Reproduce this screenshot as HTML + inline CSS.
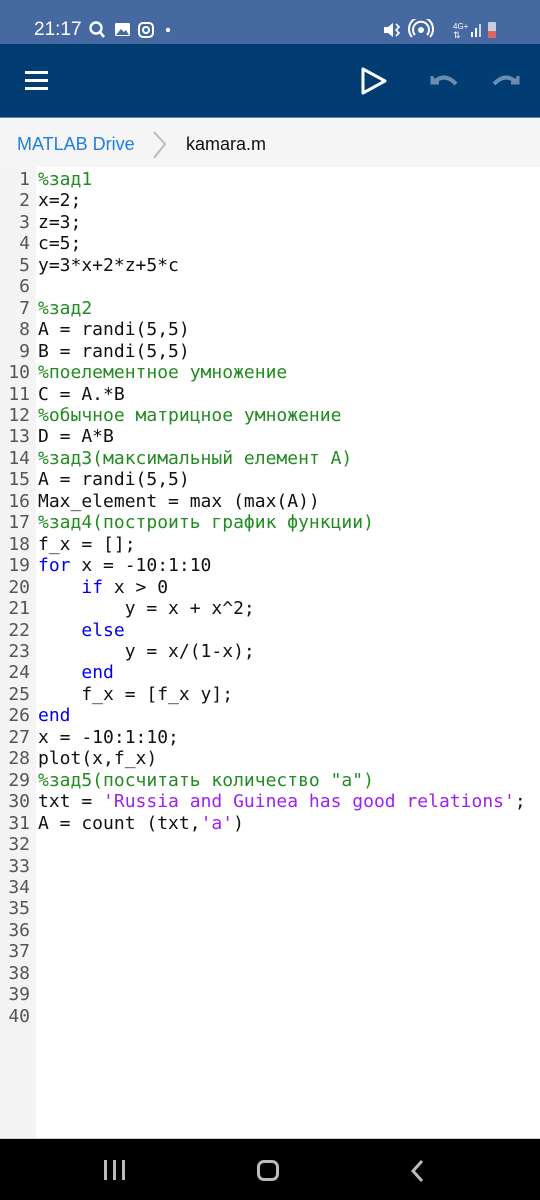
<!DOCTYPE html>
<html><head><meta charset="utf-8">
<style>
*{margin:0;padding:0;box-sizing:border-box}
body{width:540px;height:1200px;overflow:hidden;background:#fff;font-family:"Liberation Sans",sans-serif;position:relative}
.status{position:absolute;top:0;left:0;width:540px;height:44px;background:#4769a1;color:#fff}
.app{position:absolute;top:44px;left:0;width:540px;height:73px;background:#013d73}
.crumb{position:absolute;top:117px;left:0;width:540px;height:50px;background:#f5f5f5;border-top:1px solid #5d86b0}
.gut{position:absolute;top:167px;left:0;width:36px;height:971px;background:#f4f4f4}
.code{position:absolute;top:169px;left:0;width:540px;font-family:"DejaVu Sans Mono",monospace;font-size:18px;line-height:21.46px;white-space:pre;color:#111}
.ln{display:inline-block;width:30px;text-align:right;color:#555;margin-right:8px}
.c{color:#228b22}.k{color:#0000f0}.s{color:#a020f0}
.nav{position:absolute;top:1138px;left:0;width:540px;height:62px;background:#000;border-top:1px solid #ccc}
</style></head><body>
<div class="status">
<div style="position:absolute;left:34px;top:19px;font-size:19px;color:#fff">21:17</div>
<svg style="position:absolute;left:88px;top:20px" width="90" height="20" viewBox="0 0 90 20">
<circle cx="8" cy="8" r="5.5" fill="none" stroke="#fff" stroke-width="2.4"/><line x1="12" y1="12" x2="16" y2="17" stroke="#fff" stroke-width="2.6"/>
<rect x="27" y="3" width="15" height="13" rx="1.5" fill="#fff"/><path d="M28 15 L33 9 L36 12 L38 10 L41 15Z" fill="#4769a1"/>
<rect x="51" y="3" width="14" height="14" rx="4" fill="none" stroke="#fff" stroke-width="2"/><circle cx="58" cy="10" r="3" fill="none" stroke="#fff" stroke-width="2"/>
<circle cx="80" cy="10" r="2.2" fill="#fff"/></svg>
<svg style="position:absolute;left:382px;top:19px" width="130" height="22" viewBox="0 0 130 22">
<path d="M2 8h4l5-4v14l-5-4H2z" fill="#fff"/><path d="M14 5l3 3-3 3 3 3-3 3" stroke="#fff" fill="none" stroke-width="1.6"/>
<circle cx="39" cy="11" r="3" fill="#fff"/><path d="M33 16a8 8 0 1 1 12 0M30 18a12 12 0 1 1 18 0" stroke="#fff" fill="none" stroke-width="2"/>
<text x="71" y="10" font-size="8" fill="#fff" font-family="Liberation Sans">4G+</text><text x="71" y="19" font-size="9" fill="#fff">⇅</text>
<rect x="89" y="13" width="2" height="5" fill="#fff"/><rect x="93" y="9" width="2" height="9" fill="#fff"/><rect x="97" y="5" width="2" height="13" fill="#cfd8e8"/>
<rect x="106" y="3" width="8" height="16" rx="1" fill="#c8cfdc"/><rect x="106" y="12" width="8" height="7" fill="#d66"/></svg>
</div>
<div class="app">
<div style="position:absolute;left:25px;top:27px;width:23px;height:3px;background:#fff"></div>
<div style="position:absolute;left:25px;top:35px;width:23px;height:3px;background:#fff"></div>
<div style="position:absolute;left:25px;top:43px;width:23px;height:3px;background:#fff"></div>
<svg style="position:absolute;left:360px;top:22px" width="30" height="30"><path d="M3 3 L25 15 L3 27 Z" fill="none" stroke="#fff" stroke-width="3" stroke-linejoin="round"/></svg>
<svg style="position:absolute;left:428px;top:26px" width="34" height="22"><path d="M4 6 L4 13 L11 13" fill="#6c8db0" stroke="#6c8db0" stroke-width="3"/><path d="M6 12 Q17 2 28 14" fill="none" stroke="#6c8db0" stroke-width="4"/></svg>
<svg style="position:absolute;left:490px;top:26px" width="34" height="22"><path d="M28 6 L28 13 L21 13" fill="#6c8db0" stroke="#6c8db0" stroke-width="3"/><path d="M26 12 Q15 2 4 14" fill="none" stroke="#6c8db0" stroke-width="4"/></svg>
</div>
<div class="crumb">
<div style="position:absolute;left:17px;top:16px;font-size:18px;color:#1f7fe0">MATLAB Drive</div>
<svg style="position:absolute;left:150px;top:12px" width="20" height="30"><path d="M4 2 L15 14 L4 28" fill="none" stroke="#bbb" stroke-width="2"/></svg>
<div style="position:absolute;left:186px;top:16px;font-size:18px;color:#111">kamara.m</div>
</div>
<div class="gut"></div>
<div class="code"><span class="ln">1</span><span class="c">%зад1</span>
<span class="ln">2</span>x=2;
<span class="ln">3</span>z=3;
<span class="ln">4</span>c=5;
<span class="ln">5</span>y=3*x+2*z+5*c
<span class="ln">6</span>
<span class="ln">7</span><span class="c">%зад2</span>
<span class="ln">8</span>A = randi(5,5)
<span class="ln">9</span>B = randi(5,5)
<span class="ln">10</span><span class="c">%поелементное умножение</span>
<span class="ln">11</span>C = A.*B
<span class="ln">12</span><span class="c">%обычное матрицное умножение</span>
<span class="ln">13</span>D = A*B
<span class="ln">14</span><span class="c">%зад3(максимальный елемент А)</span>
<span class="ln">15</span>A = randi(5,5)
<span class="ln">16</span>Max_element = max (max(A))
<span class="ln">17</span><span class="c">%зад4(построить график функции)</span>
<span class="ln">18</span>f_x = [];
<span class="ln">19</span><span class="k">for</span> x = -10:1:10
<span class="ln">20</span>    <span class="k">if</span> x &gt; 0
<span class="ln">21</span>        y = x + x^2;
<span class="ln">22</span>    <span class="k">else</span>
<span class="ln">23</span>        y = x/(1-x);
<span class="ln">24</span>    <span class="k">end</span>
<span class="ln">25</span>    f_x = [f_x y];
<span class="ln">26</span><span class="k">end</span>
<span class="ln">27</span>x = -10:1:10;
<span class="ln">28</span>plot(x,f_x)
<span class="ln">29</span><span class="c">%зад5(посчитать количество "а")</span>
<span class="ln">30</span>txt = <span class="s">'Russia and Guinea has good relations'</span>;
<span class="ln">31</span>A = count (txt,<span class="s">'a'</span>)
<span class="ln">32</span>
<span class="ln">33</span>
<span class="ln">34</span>
<span class="ln">35</span>
<span class="ln">36</span>
<span class="ln">37</span>
<span class="ln">38</span>
<span class="ln">39</span>
<span class="ln">40</span></div>
<div class="nav">
<div style="position:absolute;left:104px;top:21px;width:3px;height:20px;background:#bbb"></div>
<div style="position:absolute;left:113px;top:21px;width:3px;height:20px;background:#bbb"></div>
<div style="position:absolute;left:122px;top:21px;width:3px;height:20px;background:#bbb"></div>
<div style="position:absolute;left:257px;top:21px;width:22px;height:21px;border:3px solid #bbb;border-radius:7px"></div>
<svg style="position:absolute;left:408px;top:20px" width="20" height="24"><path d="M14 2 L5 12 L14 22" fill="none" stroke="#bbb" stroke-width="3"/></svg>
</div>
</body></html>
